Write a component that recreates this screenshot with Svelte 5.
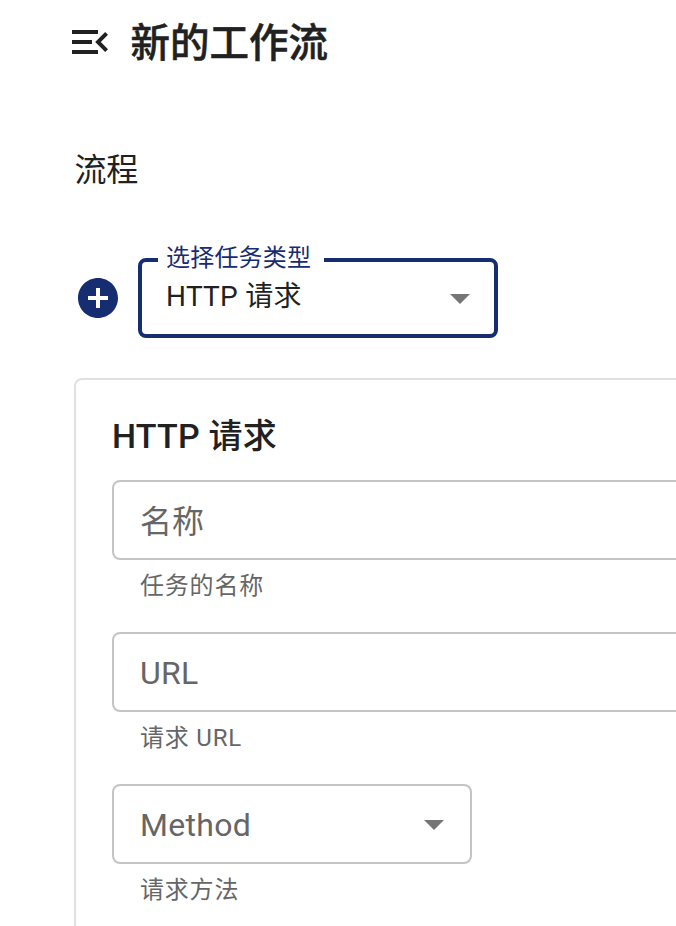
<script>
  const fields = [
    { label: '名称', help: '任务的名称', han: true },
    { label: 'URL', help: '请求 URL' },
    { label: 'Method', help: '请求方法', select: true }
  ];
</script>

<main>
  <header>
    <svg class="menu" viewBox="3 6 18 12"><path d="M3 18h13v-2H3v2zM3 13h10v-2H3v2zm0-7v2h13V6H3zm18 9.59L17.42 12 21 8.41 19.59 7l-5 5 5 5L21 15.59z" /></svg>
    <h1>新的工作流</h1>
  </header>
  <h2>流程</h2>
  <div class="picker">
    <svg class="add" viewBox="2 2 20 20"><path d="M12 2C6.48 2 2 6.48 2 12s4.48 10 10 10 10-4.48 10-10S17.52 2 12 2zm5 11h-4v4h-2v-4H7v-2h4V7h2v4h4v2z" /></svg>
    <div class="type">
      <span class="float">选择任务类型</span>
      <span class="value">HTTP 请求</span>
      <svg class="arrow" viewBox="7 10 10 5"><path d="M7 10l5 5 5-5z" /></svg>
    </div>
  </div>
  <section>
    <h3>HTTP 请求</h3>
    {#each fields as field}
      <div class="group">
        <div class="field" class:select={field.select} class:han={field.han}>
          <span>{field.label}</span>
          {#if field.select}<svg class="arrow" viewBox="7 10 10 5"><path d="M7 10l5 5 5-5z" /></svg>{/if}
        </div>
        <p>{field.help}</p>
      </div>
    {/each}
  </section>
</main>

<style>
  :global(body) { margin: 0; background: #fff; overflow: hidden; }
  main { box-sizing: border-box; width: 676px; height: 926px; overflow: hidden; padding-left: 74px; font-family: Roboto, "Noto Sans CJK SC", sans-serif; color: #212121; }
  h1, h2, h3, p { margin: 0; white-space: nowrap; }
  svg { display: block; flex: none; fill: currentColor; }
  header { display: flex; align-items: center; height: 84px; margin-left: -2px; }
  .menu { width: 36px; height: 24px; }
  h1 { margin-left: 22.5px; padding-top: 3px; font-size: 39.5px; line-height: 60px; font-weight: 500; -webkit-text-stroke: 0.5px currentColor; }
  h2 { margin-top: 62px; height: 46px; font-size: 32px; line-height: 48px; font-weight: 400; letter-spacing: -0.2px; text-indent: 0.5px; }
  .picker { display: flex; align-items: center; margin: 66px 0 0 4px; height: 80px; }
  .add { width: 40px; height: 40px; color: #172d72; }
  .type { position: relative; display: flex; align-items: center; box-sizing: border-box; width: 360px; height: 80px; margin-left: 20px; padding: 0 24px; border: 4px solid #172d72; border-radius: 8px; }
  .float { position: absolute; left: 16px; top: -20px; width: 158px; padding-left: 8px; box-sizing: content-box; background: #fff; color: #172d72; font-size: 24px; line-height: 32px; letter-spacing: 0.2px; white-space: nowrap; }
  .value { padding-bottom: 2px; font-size: 28px; line-height: 40px; letter-spacing: 0.3px; }
  .arrow { width: 20px; height: 10px; margin: 2px 0 0 auto; color: #757575; }
  section { box-sizing: border-box; width: 640px; height: 600px; margin-top: 40px; padding: 32px 36px; border: 2px solid #e0e0e0; border-radius: 8px; }
  h3 { height: 48px; font-size: 34px; line-height: 48px; font-weight: 500; letter-spacing: 0.2px; }
  .group { height: 132px; margin-top: 20px; }
  .field { display: flex; align-items: center; box-sizing: border-box; width: 600px; height: 80px; padding: 0 26px; border: 2px solid #c4c4c4; border-radius: 8px; color: #666; font-size: 32px; letter-spacing: 0.3px; }
  .field span { padding-top: 2px; }
  .han span { padding: 0 0 3px; letter-spacing: 0; }
  .select { width: 360px; }
  p { padding: 6px 0 0 28px; color: #666; font-size: 24px; line-height: 40px; letter-spacing: 0.8px; }
</style>
